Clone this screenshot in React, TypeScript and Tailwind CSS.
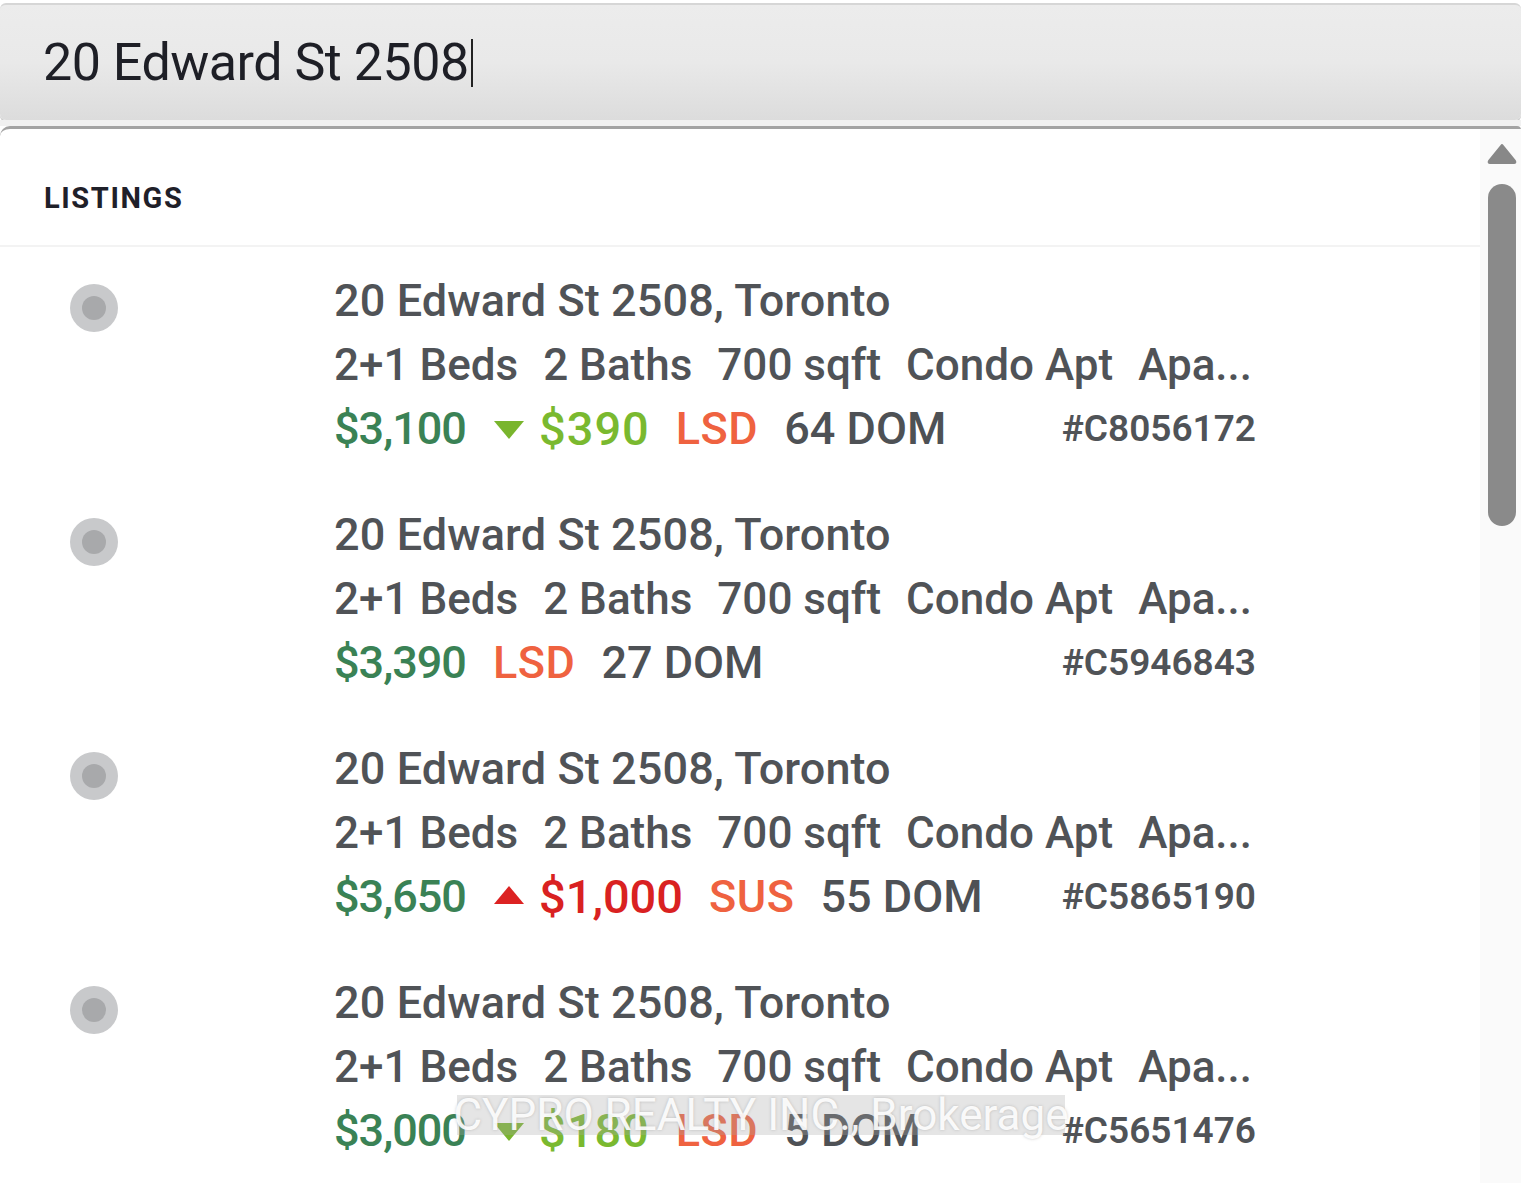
import React from "react";

type Row = {
  price: string;
  delta?: { dir: "down" | "up"; amount: string };
  status: string;
  dom: string;
  id: string;
};

const rows: Row[] = [
  { price: "$3,100", delta: { dir: "down", amount: "$390" }, status: "LSD", dom: "64 DOM", id: "#C8056172" },
  { price: "$3,390", status: "LSD", dom: "27 DOM", id: "#C5946843" },
  { price: "$3,650", delta: { dir: "up", amount: "$1,000" }, status: "SUS", dom: "55 DOM", id: "#C5865190" },
  { price: "$3,000", delta: { dir: "down", amount: "$180" }, status: "LSD", dom: "5 DOM", id: "#C5651476" },
];

const font = { fontFamily: "Roboto, 'Liberation Sans', sans-serif" };

function Listing({ r }: { r: Row }) {
  return (
    <div className="flex py-[21px]">
      <div className="w-[334px] shrink-0 pl-[70px] pt-[16px]">
        <div className="w-[48px] h-[48px] rounded-full bg-[#c8c9cb] flex items-center justify-center">
          <div className="w-[24px] h-[24px] rounded-full bg-[#a8a9ab]" />
        </div>
      </div>
      <div className="w-[922px] shrink-0 flex flex-col text-[#505357] whitespace-nowrap">
        <div className="h-[64px] flex items-center text-[45px] font-medium tracking-[0.1px] pt-[2px]">
          20 Edward St 2508, Toronto
        </div>
        <div className="h-[64px] flex items-center text-[44px] font-medium gap-[25px] pt-[2px]">
          <span className="shrink-0">2+1 Beds</span>
          <span className="shrink-0">2 Baths</span>
          <span className="shrink-0">700 sqft</span>
          <span className="shrink-0">Condo Apt</span>
          <span className="shrink-0">Apa...</span>
        </div>
        <div className="h-[64px] flex items-center text-[45px] font-medium pt-[2px]">
          <span className="text-[#3a8255] tracking-[-1px] mr-[27px]">{r.price}</span>
          {r.delta && (
            <span className="flex items-center mr-[26px]">
              {r.delta.dir === "down" ? (
                <svg width="32" height="22" viewBox="0 0 32 22" className="mr-[14px] mt-[2px]">
                  <polygon points="1,2 31,2 16,20" fill="#79b52d" />
                </svg>
              ) : (
                <svg width="32" height="22" viewBox="0 0 32 22" className="mr-[14px] -mt-[4px]">
                  <polygon points="1,20 31,20 16,2" fill="#dc2222" />
                </svg>
              )}
              <span className={r.delta.dir === "down" ? "text-[#7ab92f] text-[47px] tracking-[1px]" : "text-[#d92121] text-[47px]"}>
                {r.delta.amount}
              </span>
            </span>
          )}
          <span className="text-[#ef6240] mr-[26px] tracking-[0.5px]">{r.status}</span>
          <span className="text-[#4e5155]">{r.dom}</span>
          <span className="ml-auto text-[37px] font-semibold text-[#505357]">{r.id}</span>
        </div>
      </div>
    </div>
  );
}

export default function App() {
  return (
    <div className="relative w-[1521px] h-[1185px] overflow-hidden bg-white" style={font}>
      <div className="pt-[3px] bg-white">
        <div className="h-[117px] rounded-[6px] border-t-2 border-[#d6d6d6] bg-gradient-to-b from-[#ececec] via-[#e9e9e9] to-[#dcdcdc] flex items-center pl-[43px] shadow-[0_2px_0_#cfcfcf]">
          <span className="text-[52px] text-[#1e1f26] tracking-[-0.5px] leading-none">20 Edward St 2508</span>
          <span className="w-[2px] h-[48px] bg-[#222] ml-[2px]" />
        </div>
      </div>
      <div className="h-[6px] bg-[#f1f1f1]" />
      <div className="flex rounded-tl-[10px] rounded-tr-[4px] border-t-[3px] border-[#a3a3a3] bg-white">
        <div className="flex-1">
          <div className="h-[118px] flex items-center pl-[44px] pt-[24px] border-b-2 border-[#f3f3f3]">
            <span className="text-[29px] font-bold text-[#1f2029] tracking-[1.6px]">LISTINGS</span>
          </div>
          {rows.map((r, i) => (
            <Listing key={i} r={r} />
          ))}
        </div>
        <div className="w-[41px] bg-[#fafafa] flex flex-col items-center pl-[2px] pt-[14px]">
          <svg width="30" height="22" viewBox="0 0 30 22">
            <path d="M15 2 L28 18 Q29 20 27 20 L3 20 Q1 20 2 18 Z" fill="#888888" strokeLinejoin="round" stroke="#888888" strokeWidth="2" />
          </svg>
          <div className="mt-[19px] w-[28px] h-[342px] rounded-full bg-[#8a8a8a]" />
        </div>
      </div>
      <div
        className="absolute left-[457px] top-[1095px] w-[608px] h-[40px] flex items-center justify-center bg-[rgba(170,170,170,0.3)] text-[44px] text-white/90 tracking-[0px] leading-none whitespace-nowrap"
        style={{ textShadow: "0 0 3px rgba(120,120,120,0.4)" }}
      >
        CYPRO REALTY INC., Brokerage
      </div>
    </div>
  );
}
